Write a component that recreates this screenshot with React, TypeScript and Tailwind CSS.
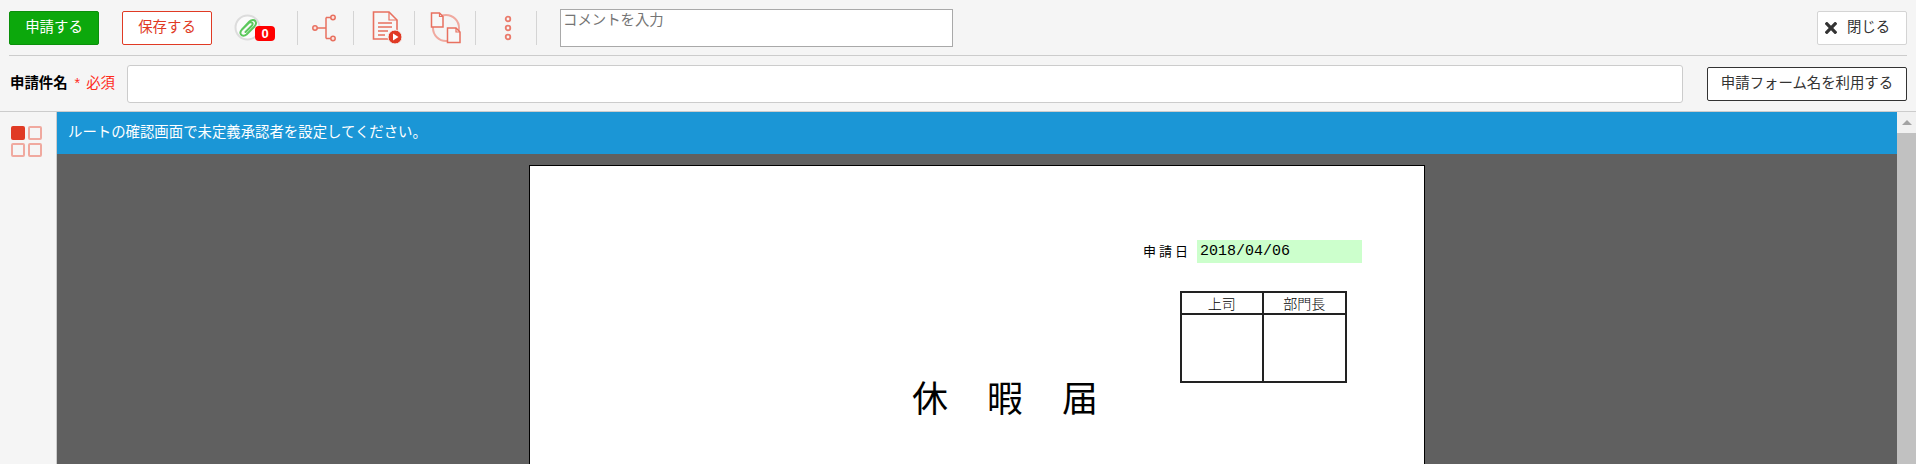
import { FaTimes } from "react-icons/fa";

const jp = "font-['Liberation_Sans','Noto_Sans_CJK_JP',sans-serif]";

const Divider = () => <div className="h-[34px] w-px bg-[#d4d4d4] shrink-0" />;

const ClipIcon = () => (
  <div className="relative w-[42px] h-[30px]">
    <svg width="28" height="28" viewBox="0 0 28 28" fill="none" className="absolute left-0 top-0">
      <circle cx="13.5" cy="13.5" r="12" fill="#fbfbfb" stroke="#dcdcdc" strokeWidth="2" />
      <path
        d="M8 15.5 L15.5 7.5 C17.5 5.5 20.5 5.5 21.5 7.5 C22.7 9.5 21.5 11.5 20 13 L12.5 20.5 C10.5 22.3 8 22 7 20.5 C6 19 6.5 17 8 15.5 L15 8.8 C16.2 7.8 18 8 18.5 9.2 C19 10.4 18.2 11.4 17.3 12.3 L11.5 18"
        stroke="#5cc85c"
        strokeWidth="2"
        strokeLinecap="round"
        strokeLinejoin="round"
      />
    </svg>
    <span className="absolute left-[21px] top-[12px] w-[20px] h-[15px] rounded-[4px] bg-[#ff0000] text-white text-[13px] leading-[15px] font-bold text-center font-['Liberation_Sans',sans-serif]">
      0
    </span>
  </div>
);

const TreeIcon = () => (
  <svg width="26" height="28" viewBox="0 0 26 28" fill="none" stroke="#e8705f" strokeWidth="1.5">
    <path d="M6 14 H15 M15 3.5 V24.5 M15 3.5 H21 M15 24.5 H21" />
    <circle cx="4" cy="14" r="2.2" fill="#fbe3df" />
    <circle cx="22" cy="3.5" r="2.2" fill="#fbe3df" />
    <circle cx="22" cy="24.5" r="2.2" fill="#fbe3df" />
  </svg>
);

const DocPlayIcon = () => (
  <svg width="30" height="34" viewBox="0 0 30 34" fill="none">
    <path d="M1.5 1 H17 L25 9 V28 H1.5 Z" stroke="#e8705f" strokeWidth="1.6" fill="#f7f7f7" />
    <path d="M17 1 V9 H25" stroke="#e8705f" strokeWidth="1.2" />
    <path d="M6 12 H20 M6 16 H20 M6 20 H16 M6 24 H13" stroke="#e8705f" strokeWidth="1.4" />
    <circle cx="23" cy="26" r="7" fill="#e03a24" stroke="#f5f5f5" strokeWidth="1" />
    <path d="M21 22.5 L26.5 26 L21 29.5 Z" fill="#fff" />
  </svg>
);

const CopyIcon = () => (
  <svg width="32" height="32" viewBox="0 0 32 32" fill="none">
    <circle cx="16" cy="16" r="13" stroke="#f0a99f" strokeWidth="2" />
    <path d="M1.5 1 H9.5 L13 4.5 V15 H1.5 Z" stroke="#e8705f" strokeWidth="1.5" fill="#f7f7f7" />
    <path d="M9.5 1 V4.5 H13" stroke="#e8705f" strokeWidth="1.2" />
    <path d="M17.5 16 H26 L30 20 V30.5 H17.5 Z" stroke="#e8705f" strokeWidth="1.5" fill="#f7f7f7" />
    <path d="M26 16 V20 H30" stroke="#e8705f" strokeWidth="1.2" />
  </svg>
);

const DotsIcon = () => (
  <svg width="8" height="26" viewBox="0 0 8 26" fill="none" stroke="#ea7a6b" strokeWidth="1.8">
    <circle cx="4" cy="4" r="2.3" />
    <circle cx="4" cy="13" r="2.3" />
    <circle cx="4" cy="22" r="2.3" />
  </svg>
);

const toolIcons = [
  { cell: "w-[55px] pr-[3px]", icon: <TreeIcon /> },
  { cell: "w-[60px] pl-[6px]", icon: <DocPlayIcon /> },
  { cell: "w-[60px] pl-[2px]", icon: <CopyIcon /> },
  { cell: "w-[60px] pl-[4px]", icon: <DotsIcon /> },
];

export default function App() {
  return (
    <div className={`w-[1916px] h-[464px] overflow-hidden bg-[#f5f5f5] text-[14.4px] ${jp}`}>
      {/* toolbar */}
      <div className="h-[55px] pl-[9px] pr-[9px] flex items-center">
        <button className="w-[90px] h-[34px] rounded-[2px] bg-[#0ca80c] border border-[#0b8f0b] text-white">申請する</button>
        <button className="w-[90px] h-[34px] ml-[23px] rounded-[2px] bg-white border border-[#e03a24] text-[#e03a24]">保存する</button>
        <div className="w-[85px] flex justify-start pl-[22px] pt-[2px]">
          <ClipIcon />
        </div>
        <Divider />
        {toolIcons.map((t, i) => (
          <div key={i} className="flex items-center">
            <div className={`${t.cell} h-[34px] flex items-center justify-center`}>{t.icon}</div>
            <Divider />
          </div>
        ))}
        <textarea
          placeholder="コメントを入力"
          className="w-[393px] h-[38px] ml-[23px] px-[2px] py-0 bg-white border border-[#a9a9a9] resize-none placeholder:text-[#757575] leading-[20px]"
        />
        <button className="ml-auto w-[90px] h-[34px] rounded-[2px] bg-white border border-[#d4d4d4] text-[#333] flex items-center pl-[7px] gap-[10px]">
          <FaTimes className="w-[12px] h-[18px] text-[#333]" />
          閉じる
        </button>
      </div>
      <div className="mx-[9px] h-px bg-[#cccccc]" />

      {/* subject row */}
      <div className="h-[56px] pl-[10px] pr-[9px] flex items-center border-b border-[#cccccc]">
        <div className="w-[117px] flex items-center">
          <span className="font-bold text-black">申請件名</span>
          <span className="ml-[7px] text-[#ff2a1a]">*</span>
          <span className="ml-[6px] text-[#ff2a1a]">必須</span>
        </div>
        <input className="w-[1556px] h-[38px] rounded-[3px] bg-white border border-[#cccccc]" />
        <button className="ml-auto w-[200px] h-[34px] rounded-[2px] bg-white border border-[#333] text-[#333]">申請フォーム名を利用する</button>
      </div>

      {/* body */}
      <div className="flex h-[352px]">
        <div className="w-[57px] shrink-0 border-r border-[#cccccc] pl-[11px] pt-[14px]">
          <div className="grid grid-cols-[14px_14px] grid-rows-[14px_14px] gap-[3px]">
            <div className="rounded-[2px] bg-[#e03a24]" />
            <div className="rounded-[2px] border-2 border-[#f0a99f]" />
            <div className="rounded-[2px] border-2 border-[#f0a99f]" />
            <div className="rounded-[2px] border-2 border-[#f0a99f]" />
          </div>
        </div>

        <div className="flex-1 min-w-0 bg-[#606060]">
          <div className="h-[42px] bg-[#1b96d6] text-white pl-[11px] flex items-center">
            ルートの確認画面で未定義承認者を設定してください。
          </div>
          {/* form sheet */}
          <div className="ml-[472px] mt-[11px] w-[896px] h-[320px] bg-white border border-black text-black">
            <div className="flex items-center justify-end pr-[62px] pt-[74px]">
              <span className="text-[13px] tracking-[3px]">申請日</span>
              <div className="ml-[6px] w-[165px] h-[23px] pl-[3px] bg-[#ccffcc] font-['Liberation_Mono',monospace] text-[15px] leading-[23px]">
                2018/04/06
              </div>
            </div>
            <div className="flex justify-end pr-[77px] mt-[28px]">
              <div className="w-[167px] h-[92px] border-2 border-[#222] grid grid-cols-2 grid-rows-[22px_1fr] text-[14px] font-light">
                <div className="border-r-2 border-b-2 border-[#222] text-center leading-[22px]">上司</div>
                <div className="border-b-2 border-[#222] text-center leading-[22px]">部門長</div>
                <div className="border-r-2 border-[#222]" />
                <div />
              </div>
            </div>
            <div className="-mt-[3px] pl-[382px] text-[36px] leading-[40px] tracking-[1.5px]">休　暇　届</div>
          </div>
        </div>

        {/* scrollbar */}
        <div className="w-[19px] shrink-0 bg-[#f1f1f1] flex flex-col items-center">
          <div className="h-[21px] flex items-center justify-center">
            <div className="w-0 h-0 border-x-[5px] border-x-transparent border-b-[5px] border-b-[#a3a3a3]" />
          </div>
          <div className="w-full flex-1 bg-[#c1c1c1]" />
        </div>
      </div>
    </div>
  );
}
